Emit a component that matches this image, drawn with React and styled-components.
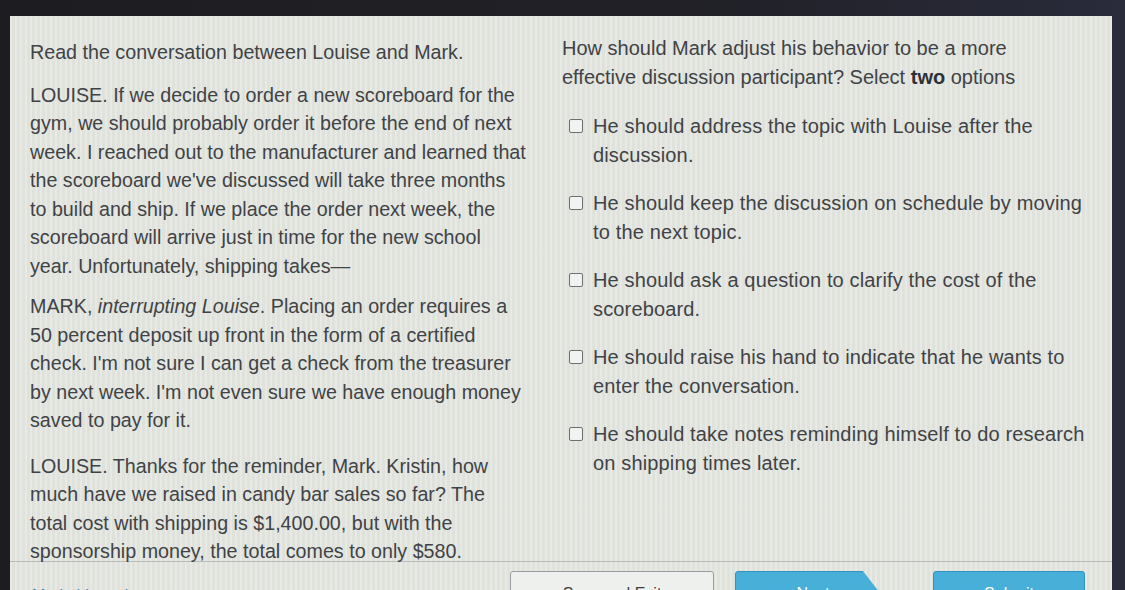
import React from "react";
import styled, { createGlobalStyle } from "styled-components";

const Global = createGlobalStyle`
  html, body { margin: 0; padding: 0; background: #1b1c21; overflow: hidden; }
  #root { width: 1125px; height: 590px; }
`;

const Screen = styled.div`
  width: 1125px;
  height: 590px;
  box-sizing: border-box;
  padding: 16px 13px 0 10px;
  background: linear-gradient(90deg, #1d1d21 0%, #202026 60%, #2a2b3b 100%);
  overflow: hidden;
`;

const Panel = styled.div`
  height: 100%;
  display: flex;
  flex-direction: column;
  background-color: #e3e5df;
  background-image: repeating-linear-gradient(
    90deg,
    rgba(255, 255, 255, 0.16) 0px,
    rgba(255, 255, 255, 0.16) 2px,
    rgba(120, 130, 120, 0.03) 2px,
    rgba(120, 130, 120, 0.03) 5px
  );
  font-family: "Liberation Sans", Arial, sans-serif;
  color: #404346;
  font-size: 19.7px;
  line-height: 28.5px;
`;

const Columns = styled.div`
  display: grid;
  grid-template-columns: 542px 1fr;
  height: 546px;
  border-bottom: 1px solid #b9bcb8;
  box-sizing: border-box;
`;

const LeftCol = styled.div`
  padding: 22px 0 0 20px;
`;

const RightCol = styled.div`
  padding: 18px 0 0 10px;
`;

const Para = styled.p`
  margin: 0 0 ${(p) => p.$gap || 14}px 0;
  white-space: nowrap;
`;

const Question = styled.p`
  margin: 0 0 21px 0;
  white-space: nowrap;
  font-size: 20px;
  b { font-weight: 700; color: #2e3134; }
`;

const Options = styled.div`
  display: flex;
  flex-direction: column;
  gap: 20px;
`;

const Option = styled.label`
  display: flex;
  align-items: flex-start;
  gap: 10px;
  padding-left: 7px;
  white-space: nowrap;
  font-size: 20px;
  letter-spacing: 0.15px;
`;

const Box = styled.span`
  flex: none;
  width: 12px;
  height: 12px;
  margin-top: 7px;
  border: 1.5px solid #6d7073;
  border-radius: 2px;
  background: #f2f3f0;
`;

const Footer = styled.div`
  position: relative;
  flex: 1;
  display: flex;
  align-items: flex-start;
  padding-top: 9px;
`;

const MarkLink = styled.span`
  position: absolute;
  left: 22px;
  top: 20px;
  color: #3b7ea3;
  font-size: 16px;
`;

const Buttons = styled.div`
  display: flex;
  margin-left: 500px;
`;

const Button = styled.button`
  height: 36px;
  box-sizing: border-box;
  font-family: "Liberation Sans", Arial, sans-serif;
  font-size: 16px;
  padding: 9px 0 0;
  text-align: center;
  vertical-align: top;
  border-radius: 3px;
  border: 1px solid ${(p) => (p.$primary ? "#2f93bd" : "#9a9d9f")};
  background: ${(p) => (p.$primary ? "#48afd9" : "#eef0ed")};
  color: ${(p) => (p.$primary ? "#ffffff" : "#3c3f42")};
  width: ${(p) => p.$w}px;
  margin-right: ${(p) => p.$mr || 0}px;
  clip-path: ${(p) =>
    p.$arrow ? "polygon(0 0, 82% 0, 100% 100%, 0 100%)" : "none"};
`;

export default function App() {
  return (
    <>
      <Global />
      <Screen>
        <Panel>
          <Columns>
            <LeftCol>
              <Para $gap={14}>Read the conversation between Louise and Mark.</Para>
              <Para $gap={12}>
                LOUISE. If we decide to order a new scoreboard for the
                <br />
                gym, we should probably order it before the end of next
                <br />
                week. I reached out to the manufacturer and learned that
                <br />
                the scoreboard we've discussed will take three months
                <br />
                to build and ship. If we place the order next week, the
                <br />
                scoreboard will arrive just in time for the new school
                <br />
                year. Unfortunately, shipping takes—
              </Para>
              <Para $gap={17}>
                MARK, <i>interrupting Louise</i>. Placing an order requires a
                <br />
                50 percent deposit up front in the form of a certified
                <br />
                check. I'm not sure I can get a check from the treasurer
                <br />
                by next week. I'm not even sure we have enough money
                <br />
                saved to pay for it.
              </Para>
              <Para $gap={0}>
                LOUISE. Thanks for the reminder, Mark. Kristin, how
                <br />
                much have we raised in candy bar sales so far? The
                <br />
                total cost with shipping is $1,400.00, but with the
                <br />
                sponsorship money, the total comes to only $580.
              </Para>
            </LeftCol>
            <RightCol>
              <Question>
                How should Mark adjust his behavior to be a more
                <br />
                effective discussion participant? Select <b>two</b> options
              </Question>
              <Options>
                <Option>
                  <Box />
                  <span>
                    He should address the topic with Louise after the
                    <br />
                    discussion.
                  </span>
                </Option>
                <Option>
                  <Box />
                  <span>
                    He should keep the discussion on schedule by moving
                    <br />
                    to the next topic.
                  </span>
                </Option>
                <Option>
                  <Box />
                  <span>
                    He should ask a question to clarify the cost of the
                    <br />
                    scoreboard.
                  </span>
                </Option>
                <Option>
                  <Box />
                  <span>
                    He should raise his hand to indicate that he wants to
                    <br />
                    enter the conversation.
                  </span>
                </Option>
                <Option>
                  <Box />
                  <span>
                    He should take notes reminding himself to do research
                    <br />
                    on shipping times later.
                  </span>
                </Option>
              </Options>
            </RightCol>
          </Columns>
          <Footer>
            <MarkLink>Mark this and return</MarkLink>
            <Buttons>
              <Button $w={204} $mr={21}>Save and Exit</Button>
              <Button $primary $arrow $w={156} $mr={42}>Next</Button>
              <Button $primary $w={152}>Submit</Button>
            </Buttons>
          </Footer>
        </Panel>
      </Screen>
    </>
  );
}
